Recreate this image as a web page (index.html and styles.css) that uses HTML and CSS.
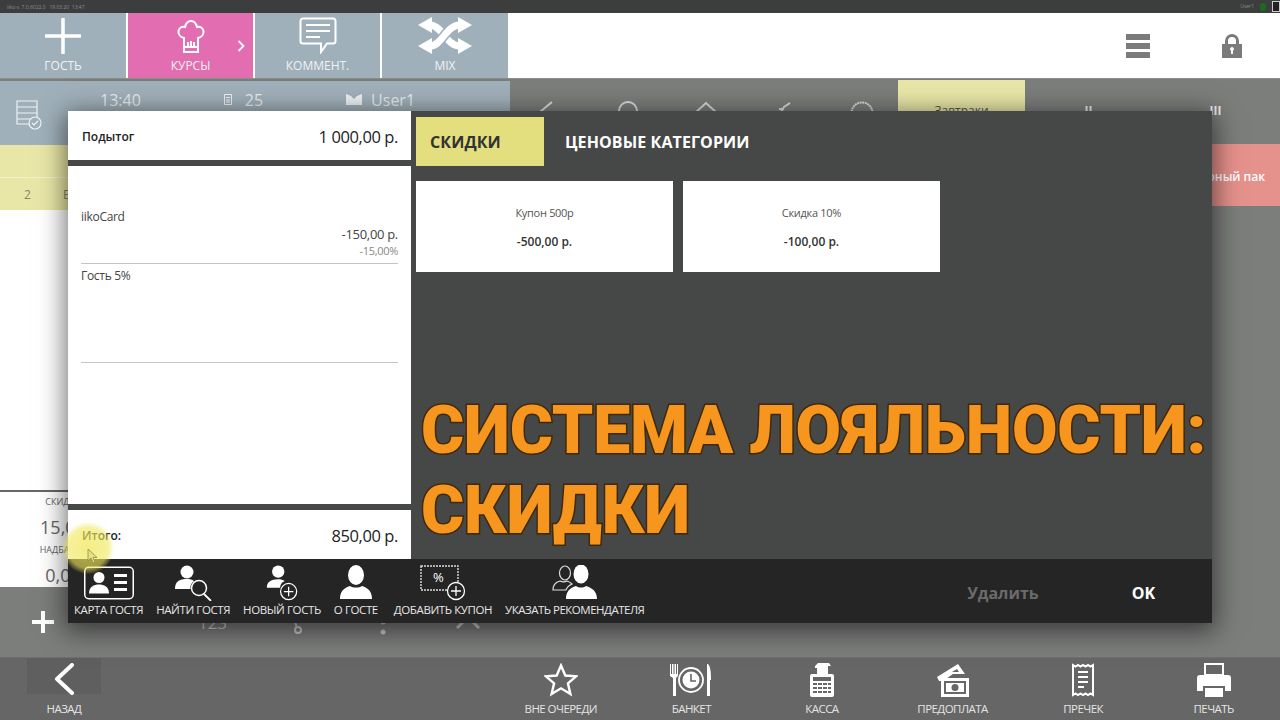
FILE: index.html
```html
<!DOCTYPE html>
<html lang="ru">

<head>
  <meta charset="UTF-8" />
  <title>iiko</title>
  <link rel="stylesheet" href="styles.css">
</head>

<body>
  <div class="app">
    <!-- Status line -->
    <div class="status">
      <span>iiko v. 7.0.6022.0 &nbsp; 19.03.20 &nbsp;13:47</span>
      <span class="status-right">User1 <i class="dot"></i><i class="tablet"></i></span>
    </div>

    <!-- Top buttons -->
    <div class="top">
      <div class="top-btn">
        <svg width="36" height="36" viewBox="0 0 36 36"><path d="M18 1v34M1 18h34" stroke="#fff" stroke-width="3.5" stroke-linecap="round" /></svg>
        <span>ГОСТЬ</span>
      </div>
      <div class="top-btn pink">
        <svg width="28" height="34" viewBox="0 0 28 34" fill="none" stroke="#fff" stroke-width="2"><path d="M7 32V18C3 17 1 14 1.500 11 2 8 5 6 8 7 9 3 11 1 14 1s5 2 6 6c3-1 6 1 6.500 4 .5 3-1.500 6-5.500 7v14z" /><path d="M7 27h14M11 27v-5M14 27v-6M17 27v-5" /></svg>
        <span>КУРСЫ</span>
        <svg class="chevron" width="8" height="12" viewBox="0 0 8 12" fill="none" stroke="#fff" stroke-width="1.800"><path d="M1.500 1l5 5-5 5" /></svg>
      </div>
      <div class="top-btn">
        <svg width="38" height="37" viewBox="0 0 38 37" fill="none" stroke="#fff" stroke-width="2"><path d="M4 1.500h30a2.500 2.500 0 0 1 2.500 2.500v20a2.500 2.500 0 0 1-2.500 2.500h-6L22 35v-8.500H4A2.500 2.500 0 0 1 1.500 24V4A2.500 2.500 0 0 1 4 1.500z" /><path d="M7 8h24M7 14h24M7 20h14" /></svg>
        <span>КОММЕНТ.</span>
      </div>
      <div class="top-btn">
        <svg width="54" height="37" viewBox="0 0 54 37">
          <path d="M12 8C24 8 28 29 42 29" fill="none" stroke="#fff" stroke-width="7" />
          <path d="M42 8C28 8 24 29 12 29" fill="none" stroke="#a0b0ba" stroke-width="10" />
          <path d="M42 8C28 8 24 29 12 29" fill="none" stroke="#fff" stroke-width="7" />
          <path d="M0 8L14 0v16zM54 8L40 0v16zM0 29l14-8v16zM54 29l-14-8v16z" fill="#fff" />
        </svg>
        <span>MIX</span>
      </div>
      <div class="top-blank">
        <div class="burger"><i></i><i></i><i></i></div>
        <svg width="20" height="24" viewBox="0 0 20 24" fill="#7b7b7b"><path d="M3 10V7a7 7 0 0 1 14 0v3h3v14H0V10zm3 0h8V7a4 4 0 0 0-8 0zm4 3a2 2 0 0 0-1 3.700V20h2v-3.300A2 2 0 0 0 10 13z" fill-rule="evenodd" /></svg>
      </div>
    </div>

    <!-- Order behind the dialog -->
    <div class="main">
      <div class="order">
        <div class="info">
          <svg width="26" height="30" viewBox="0 0 26 30" fill="none" stroke="#eef2f4" stroke-width="1.200"><path d="M1 1h20v23H1zM1 7h20M1 13h20M1 19h20" /><circle cx="19" cy="23" r="6" fill="#a0b0ba" /><path d="M16 23l2 2 4-4" /></svg>
          <span class="info-time">13:40</span>
          <svg class="info-icon" width="8" height="11" viewBox="0 0 8 11" fill="none" stroke="#eef2f4"><path d="M.5.5h7v10h-7zM2 3.500h4M2 6h4M2 8h4" /></svg>
          <span class="info-num">25</span>
          <svg class="info-icon user-icon" width="16" height="11" viewBox="0 0 16 11" fill="#eef2f4"><path d="M0 0l5 2 3 3 3-3 5-2v11H0z" /></svg>
          <span class="info-user">User1</span>
        </div>
        <div class="order-head"></div>
        <div class="order-row"><span>2</span><span>Б</span></div>
        <div class="ticket">
          <div class="sums">
            <small>СКИДКА</small>
            <b>15,00</b>
            <small>НАДБАВКА</small>
            <b>0,00</b>
          </div>
        </div>
        <div class="order-tools">
          <svg width="26" height="26" viewBox="0 0 26 26"><path d="M13 2v22M2 13h22" stroke="#fff" stroke-width="4" /></svg>
          <svg width="24" height="4" viewBox="0 0 24 4"><path d="M0 2h24" stroke="#ccc" stroke-width="2" /></svg>
          <span class="tool-text">123</span>
          <svg width="24" height="24" viewBox="0 0 24 24" fill="none" stroke="#ccc" stroke-width="2"><path d="M22 8H8M6 2l5 16" /><circle cx="12" cy="20" r="3" /></svg>
          <svg width="6" height="26" viewBox="0 0 6 26" fill="#ccc"><circle cx="3" cy="3" r="2.500" /><circle cx="3" cy="13" r="2.500" /><circle cx="3" cy="23" r="2.500" /></svg>
          <svg width="24" height="16" viewBox="0 0 24 16" fill="none" stroke="#ccc" stroke-width="3"><path d="M1 14L12 3l11 11" /></svg>
        </div>
      </div>
      <div class="menu">
        <div class="cats">
          <div class="cat-icons">
            <svg width="24" height="24" viewBox="0 0 24 24" fill="none" stroke="#ddd" stroke-width="2"><path d="M14 1L2 11h22" /></svg>
            <svg width="24" height="24" viewBox="0 0 24 24" fill="none" stroke="#ddd" stroke-width="2"><circle cx="12" cy="10" r="9" /></svg>
            <svg width="24" height="24" viewBox="0 0 24 24" fill="none" stroke="#ddd" stroke-width="2"><path d="M1 12L12 2l11 10-11 10z" /></svg>
            <svg width="24" height="24" viewBox="0 0 24 24" fill="none" stroke="#ddd" stroke-width="2"><path d="M4 11h16M9 11l3-5 6-4M7 8h5" /></svg>
            <svg width="24" height="24" viewBox="0 0 24 24" fill="none" stroke="#ddd" stroke-width="2" stroke-dasharray="2 .6"><circle cx="12" cy="12" r="10.500" /></svg>
          </div>
          <div class="cat-tab active">Завтраки</div>
          <div class="cat-tab">II</div>
          <div class="cat-tab">III</div>
        </div>
        <div class="cat-pink">оный пак</div>
      </div>
    </div>

    <!-- Bottom bar -->
    <div class="bottom">
      <div class="back">
        <svg width="22" height="32" viewBox="0 0 22 32" fill="none" stroke="#fff" stroke-width="4" stroke-linecap="round" stroke-linejoin="round"><path d="M19 2L4 16l15 14" /></svg>
        <span>НАЗАД</span>
      </div>
      <div class="bottom-btns">
        <div class="bottom-btn">
          <svg width="34" height="34" viewBox="0 0 34 34" fill="none" stroke="#fff" stroke-width="2.400"><path d="M17 2.500l4.300 10 10.700.9-8.100 7 2.500 10.600L17 25.300 7.600 31l2.500-10.600-8.100-7 10.700-.9z" /></svg>
          <span>ВНЕ ОЧЕРЕДИ</span>
        </div>
        <div class="bottom-btn">
          <svg width="44" height="34" viewBox="0 0 44 34" fill="#fff"><path d="M1 1h1v10h1V1h1.500v10h1V1H7v10h1V1h1v12l-2 2v18H4V15l-3-2z" /><circle cx="22" cy="17" r="12" fill="none" stroke="#fff" stroke-width="1.800" /><circle cx="22" cy="17" r="8.500" /><path d="M22 11v7h5" fill="none" stroke="#666" stroke-width="1.600" /><path d="M39 1c3 3 3 11 3 16h-1v16h-3V1z" /></svg>
          <span>БАНКЕТ</span>
        </div>
        <div class="bottom-btn">
          <svg width="24" height="34" viewBox="0 0 24 34"><path d="M8 0h11l2 3h-3v8h4a2 2 0 0 1 2 2v19a2 2 0 0 1-2 2H2a2 2 0 0 1-2-2V13a2 2 0 0 1 2-2h5V5H5V3z" fill="#fff" /><path d="M3 14h18v4H3zM3 20h4v2H3zM8 20h4v2H8zM13 20h4v2h-4zM18 20h3v2h-3zM3 24h4v2H3zM8 24h4v2H8zM13 24h4v2h-4zM18 24h3v2h-3zM3 28h4v2H3zM8 28h4v2H8zM13 28h4v2h-4zM18 28h3v2h-3z" fill="#666" /></svg>
          <span>КАССА</span>
        </div>
        <div class="bottom-btn">
          <svg width="34" height="34" viewBox="0 0 34 34" fill="#fff"><path d="M1 14L22 1l7 10H17L7 18H3z" /><path d="M16 9l5-3 2 3z" fill="#666" /><path d="M5 15h28v19H5z" /><path d="M8 18h22v13H8z" fill="#666" /><path d="M10 20h18v9H10z" /><circle cx="19" cy="24.500" r="3.500" fill="#666" /></svg>
          <span>ПРЕДОПЛАТА</span>
        </div>
        <div class="bottom-btn">
          <svg width="24" height="34" viewBox="0 0 24 34" fill="none" stroke="#fff" stroke-width="2"><path d="M2 2l2.500 1.500L7 2l2.500 1.500L12 2l2.500 1.500L17 2l2.500 1.500L22 2v30l-2.500-1.500L17 32l-2.500-1.500L12 32l-2.500-1.500L7 32l-2.500-1.500L2 32z" /><path d="M7 9h10M7 14h10M7 19h10M7 24h6" stroke-width="2.200" /></svg>
          <span>ПРЕЧЕК</span>
        </div>
        <div class="bottom-btn">
          <svg width="34" height="34" viewBox="0 0 34 34"><path d="M8 1h18v11H8z" fill="none" stroke="#fff" stroke-width="2" /><path d="M3 12h28a3 3 0 0 1 3 3v13h-6v-5H6v5H0V15a3 3 0 0 1 3-3z" fill="#fff" /><path d="M8 25h18v9H8z" fill="#fff" /></svg>
          <span>ПЕЧАТЬ</span>
        </div>
      </div>
    </div>

    <!-- Discount dialog -->
    <div class="dialog">
      <div class="totals">
        <div class="panel total-line">
          <span class="total-name">Подытог</span>
          <span class="total-sum">1 000,00 р.</span>
        </div>
        <div class="panel discounts">
          <div class="discount first">
            <div>iikoCard</div>
            <div class="discount-sum">-150,00 р.</div>
            <div class="discount-pct">-15,00%</div>
          </div>
          <div class="discount">
            <div>Гость 5%</div>
          </div>
        </div>
        <div class="panel total-line">
          <span class="total-name">Итого:</span>
          <span class="total-sum">850,00 р.</span>
        </div>
      </div>

      <div class="offers">
        <div class="tabs">
          <div class="tab active">СКИДКИ</div>
          <div class="tab">ЦЕНОВЫЕ КАТЕГОРИИ</div>
        </div>
        <div class="cards">
          <div class="card">
            <div>Купон 500р</div>
            <b>-500,00 р.</b>
          </div>
          <div class="card">
            <div>Скидка 10%</div>
            <b>-100,00 р.</b>
          </div>
        </div>
        <h1 class="caption">СИСТЕМА ЛОЯЛЬНОСТИ:<br>СКИДКИ</h1>
      </div>

      <div class="actions">
        <div class="action">
          <svg width="50" height="33" viewBox="0 0 50 33"><rect x=".75" y=".75" width="48.500" height="31.500" rx="4" fill="none" stroke="#fff" stroke-width="1.500" /><circle cx="15" cy="11" r="5.500" fill="#fff" /><path d="M5 27c0-7 5-9 10-9s10 2 10 9z" fill="#fff" /><path d="M30 9h13M30 16h13M30 23h13" stroke="#fff" stroke-width="3" /></svg>
          <span>КАРТА ГОСТЯ</span>
        </div>
        <div class="action">
          <svg width="38" height="36" viewBox="0 0 38 36"><circle cx="13" cy="7" r="6.500" fill="#fff" /><path d="M1 24c0-8 5-10 12-10 3 0 5 .5 7 2-3 2-4 5-3.500 8z" fill="#fff" /><circle cx="25" cy="23" r="7.500" fill="none" stroke="#fff" stroke-width="1.500" /><path d="M30 29l7 7" stroke="#fff" stroke-width="1.800" /></svg>
          <span>НАЙТИ ГОСТЯ</span>
        </div>
        <div class="action">
          <svg width="34" height="38" viewBox="0 0 34 38"><circle cx="13" cy="7" r="6.500" fill="#fff" /><path d="M1 24c0-6 4-9 12-9 3 0 5 .5 7 2-3 1-5 4-5 7z" fill="#fff" /><circle cx="24" cy="28" r="8.500" fill="none" stroke="#fff" stroke-width="1.300" /><path d="M24 23v10M19 28h10" stroke="#fff" stroke-width="1.300" /></svg>
          <span>НОВЫЙ ГОСТЬ</span>
        </div>
        <div class="action">
          <svg width="34" height="36" viewBox="0 0 34 36"><ellipse cx="17" cy="10" rx="8" ry="10" fill="#fff" /><path d="M1 34c0-8 4-11 10-13 3 2 9 2 12 0 6 2 10 5 10 13z" fill="#fff" /></svg>
          <span>О ГОСТЕ</span>
        </div>
        <div class="action coupon">
          <svg width="46" height="36" viewBox="0 0 46 36"><rect x="1" y="1" width="37" height="24" fill="none" stroke="#ddd" stroke-width="1.400" stroke-dasharray="2 1" /><text x="13" y="17" fill="#fff" font-size="13" font-family="Open Sans">%</text><circle cx="36" cy="26" r="8.500" fill="#252525" stroke="#fff" stroke-width="1.300" /><path d="M36 21v10M31 26h10" stroke="#fff" stroke-width="1.300" /></svg>
          <span>ДОБАВИТЬ КУПОН</span>
        </div>
        <div class="action referrer">
          <svg width="46" height="36" viewBox="0 0 46 36"><ellipse cx="13" cy="8" rx="5.500" ry="7" fill="none" stroke="#ddd" stroke-width="1.200" /><path d="M1 25c0-6 3-8 7-9 2 1 5 1 7 0 2 .5 4 2 5 3-2 1-5 3-6 6z" fill="none" stroke="#ddd" stroke-width="1.200" /><ellipse cx="29" cy="9" rx="7.500" ry="9.500" fill="#fff" /><path d="M14 34c0-8 4-11 10-13 3 2 7 2 10 0 6 2 11 5 11 13z" fill="#fff" /></svg>
          <span>УКАЗАТЬ РЕКОМЕНДАТЕЛЯ</span>
        </div>
        <div class="action-btns">
          <span class="disabled">Удалить</span>
          <span>OK</span>
        </div>
      </div>
    </div>

    <!-- Mouse pointer with highlight -->
    <div class="pointer">
      <svg width="11" height="16" viewBox="0 0 11 16"><path d="M1 1v12l3-3 2 5 2-1-2-4.500h4z" fill="#e9e27a" stroke="#8c8a55" stroke-width=".8" /></svg>
    </div>
  </div>
</body>

</html>
```

FILE: styles.css
```css
* {
  box-sizing: border-box;
}

body {
  margin: 0;
  font-family: "Open Sans", Arial, sans-serif;
  background-color: #7c7e7c;
  overflow: hidden;
}

.app {
  position: relative;
  width: 1280px;
  height: 720px;
  display: flex;
  flex-direction: column;
  overflow: hidden;
}

.status {
  height: 13px;
  flex-shrink: 0;
  padding: 0 0 0 7px;
  background-color: #3c3e3e;
  color: #8b8d8d;
  font-size: 5px;
  line-height: 15px;
  display: flex;
  justify-content: space-between;
}

.status-right {
  display: flex;
  align-items: center;
  gap: 6px;
}

.dot {
  width: 6px;
  height: 8px;
  border-radius: 3px;
  background-color: #1d6b1d;
}

.tablet {
  width: 8px;
  height: 11px;
  border: 1px solid #ccc;
  background-color: #222;
}

.top {
  height: 65px;
  display: flex;
  background-color: #fff;
  flex-shrink: 0;
}

.top-btn {
  position: relative;
  width: 125px;
  margin-right: 2px;
  background-color: #a0b0ba;
  color: #eef2f4;
  font-size: 12px;
  display: flex;
  flex-direction: column;
  align-items: center;
  justify-content: flex-end;
  padding-bottom: 4px;
  gap: 3px;
}

.top-btn:first-child,
.top-btn:nth-child(4) {
  width: 126px;
}

.top-btn.pink {
  background-color: #e26eb1;
}

.chevron {
  position: absolute;
  right: 8px;
  top: 27px;
}

.top-blank {
  flex: 1;
  margin-left: -2px;
  display: flex;
  justify-content: flex-end;
  align-items: center;
  gap: 72px;
  padding: 0 38px 0 0;
  background-color: #fff;
}

.burger {
  width: 24px;
  display: flex;
  flex-direction: column;
  gap: 3px;
}

.burger i {
  height: 6px;
  background-color: #7b7b7b;
}

.main {
  flex: 1;
  min-height: 0;
  display: flex;
  border-top: 1px solid #8d8f8d;
}

.order {
  width: 510px;
  display: flex;
  flex-direction: column;
  padding-top: 2px;
}

.info {
  height: 64px;
  background-color: #a0b0ba;
  color: #e6ebee;
  font-size: 16px;
  display: flex;
  align-items: flex-start;
  padding: 8px 0 0 16px;
}

.info svg {
  margin-top: 11px;
}

.info .info-icon {
  margin: 5px 0 0 0;
}

.info-time {
  margin: 0 83px 0 58px;
}

.info-num {
  margin: 0 83px 0 13px;
}

.info-user {
  margin-left: 9px;
}

.order-head {
  height: 33px;
  background-color: #e9e7a7;
  border-bottom: 1px solid #f3f1c6;
}

.order-row {
  height: 32px;
  background-color: #e9e7a7;
  color: #86866a;
  font-size: 12px;
  display: flex;
  gap: 32px;
  align-items: center;
  padding-left: 24px;
}

.ticket {
  flex: 1;
  min-height: 0;
  background-color: #fff;
  padding-top: 280px;
}

.sums {
  border-top: 2px solid #666;
  text-align: center;
  width: 100%;
  padding-right: 384px;
  color: #666;
}

.sums small {
  display: block;
  font-size: 9px;
  line-height: 12px;
  margin-top: 4px;
}

.sums small + b + small {
  margin-top: 6px;
}

.sums b {
  display: block;
  font-weight: 400;
  font-size: 18px;
  line-height: 22px;
  margin-top: 8px;
}

.order-tools {
  height: 70px;
  flex-shrink: 0;
  display: grid;
  grid-template-columns: repeat(6, 85px);
  justify-items: center;
  align-items: center;
  color: #ccc;
}

.tool-text {
  font-size: 17px;
}

.menu {
  flex: 1;
  display: flex;
  flex-direction: column;
}

.cats {
  height: 65px;
  flex-shrink: 0;
  display: flex;
  padding-top: 1px;
}

.cat-icons {
  width: 388px;
  display: grid;
  grid-template-columns: repeat(5, 78px);
  justify-items: center;
  padding: 21px 0 0 1px;
}

.cat-tab {
  width: 127px;
  color: #eee;
  text-align: center;
  font-size: 12px;
  font-weight: 700;
  padding-top: 22px;
}

.cat-tab.active {
  background-color: #e9e7a7;
  color: #555;
  font-weight: 400;
  height: 62px;
}

.cat-pink {
  align-self: flex-end;
  width: 68px;
  height: 62px;
  background-color: #e5918c;
  color: #fff;
  font-size: 12px;
  font-weight: 600;
  display: flex;
  justify-content: flex-end;
  align-items: center;
  padding: 2px 15px 0 0;
  white-space: nowrap;
}

.bottom {
  height: 63px;
  flex-shrink: 0;
  background-color: #666;
  border-top: 1px solid #6e6e6e;
  color: #e4e4e4;
  font-size: 11.500px;
  letter-spacing: -0.55px;
  display: flex;
  justify-content: space-between;
}

.back {
  width: 74px;
  margin-left: 27px;
  height: 36px;
  background-color: #5f5f5f;
  display: flex;
  flex-direction: column;
  align-items: center;
  gap: 6px;
  padding-top: 5px;
  flex-shrink: 0;
}

.back svg {
  flex-shrink: 0;
}

.back span {
  white-space: nowrap;
}

.bottom-btns {
  display: flex;
  padding-right: 1px;
}

.bottom-btn {
  width: 130.600px;
  display: flex;
  flex-direction: column;
  align-items: center;
  padding-top: 5px;
  gap: 4px;
}

/* dialog sits over the order screen */
.dialog {
  position: absolute;
  left: 68px;
  top: 111px;
  width: 1144px;
  height: 512px;
  background-color: #464747;
  box-shadow: 0 5px 24px 3px rgba(0, 0, 0, 0.55);
  display: grid;
  grid-template-columns: 343px minmax(0, 1fr);
  grid-template-rows: 448px 64px;
}

.totals {
  display: flex;
  flex-direction: column;
  gap: 6px;
  min-height: 0;
}

.panel {
  background-color: #fff;
}

.total-line {
  height: 49px;
  flex-shrink: 0;
  display: flex;
  justify-content: space-between;
  align-items: center;
  padding: 2px 13px 0 14px;
  color: #222;
}

.total-name {
  font-size: 12px;
  font-weight: 600;
}

.total-sum {
  font-size: 16.500px;
  font-weight: 400;
  letter-spacing: -0.4px;
}

.discounts {
  flex: 1;
  padding: 0 13px;
  font-size: 12px;
  letter-spacing: -0.3px;
  color: #444;
}

.discount {
  height: 99px;
  padding-top: 3px;
  border-bottom: 1px solid #c4c4c4;
}

.discount.first {
  height: 98px;
  padding-top: 42px;
}

.discount-sum {
  text-align: right;
  font-size: 13px;
}

.discount-pct {
  text-align: right;
  font-size: 11px;
  color: #888;
}

.offers {
  padding: 6px 5px 0;
  display: flex;
  flex-direction: column;
}

.tabs {
  display: flex;
  height: 49px;
  flex-shrink: 0;
}

.tab {
  padding: 0 21px;
  color: #fff;
  font-size: 16px;
  font-weight: 700;
  letter-spacing: 0.1px;
  line-height: 51px;
}

.tab.active {
  width: 128px;
  padding: 0 14px;
  background-color: #e3df7e;
  color: #333;
}

.cards {
  display: flex;
  gap: 10px;
  margin-top: 15px;
}

.card {
  width: 257px;
  height: 91px;
  background-color: #fff;
  color: #555;
  font-size: 11px;
  letter-spacing: -0.3px;
  text-align: center;
  padding-top: 24px;
}

.card b {
  display: block;
  margin-top: 13px;
  color: #333;
  font-size: 12px;
  font-weight: 600;
  letter-spacing: 0;
}

.caption {
  margin: 119px 0 0 5px;
  font-family: Roboto, Arial, sans-serif;
  font-size: 66px;
  font-weight: 900;
  line-height: 80px;
  letter-spacing: -0.2px;
  color: #f7961f;
  -webkit-text-stroke: 3px #402908;
  paint-order: stroke fill;
  white-space: nowrap;
}

.actions {
  grid-column: 1 / 3;
  background-color: #252525;
  color: #e6e6e6;
  font-size: 11.500px;
  letter-spacing: -0.4px;
  display: flex;
  gap: 13px;
  padding: 6px 0 0 6px;
}

.action {
  display: flex;
  flex-direction: column;
  align-items: center;
  height: 52px;
  white-space: nowrap;
}

.action.coupon {
  margin-left: 3px;
}

.action.referrer {
  letter-spacing: -0.5px;
}

.action svg {
  height: 36px;
  flex-shrink: 0;
}

.action span {
  margin-top: auto;
  line-height: 14px;
}

.action-btns {
  margin-left: auto;
  display: flex;
  gap: 93px;
  padding: 17px 57px 0 0;
  font-size: 16px;
  font-weight: 700;
  letter-spacing: 0;
  color: #fff;
}

.disabled {
  color: #6b6b6b;
}

.pointer {
  position: absolute;
  left: 62px;
  top: 522px;
  width: 52px;
  height: 52px;
  padding: 25px 0 0 25px;
  border-radius: 50%;
  background: radial-gradient(circle, rgba(240, 232, 90, 0.75) 0%, rgba(240, 232, 90, 0.6) 55%, rgba(240, 232, 90, 0) 72%);
}
```
